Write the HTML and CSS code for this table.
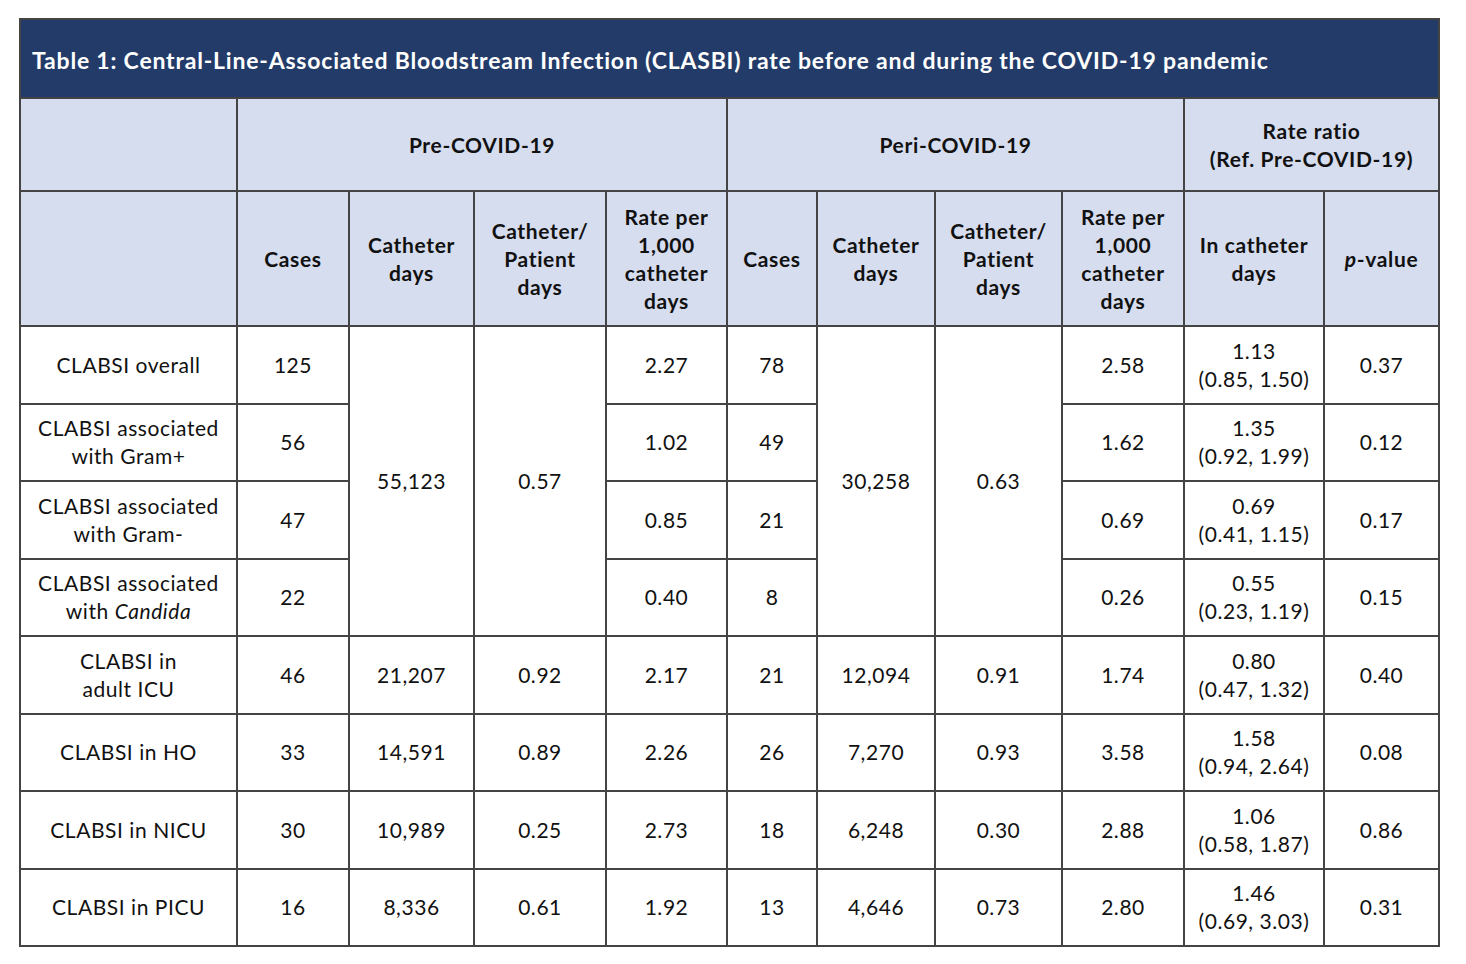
FILE: index.html
```html
<!DOCTYPE html>
<html>
<head>
<meta charset="utf-8">
<link rel="stylesheet" href="styles.css">
</head>
<body>
<table class="tbl">
  <colgroup>
    <col class="c-label"><col class="c-cases"><col class="c-days"><col class="c-ratio"><col class="c-rate">
    <col class="c-cases2"><col class="c-days2"><col class="c-ratio2"><col class="c-rate2">
    <col class="c-rr"><col class="c-p">
  </colgroup>
  <thead>
    <tr class="r-title"><th colspan="11" class="title">Table 1: Central-Line-Associated Bloodstream Infection (CLASBI) rate before and during the COVID-19 pandemic</th></tr>
    <tr class="r-h1 head">
      <th></th>
      <th colspan="4">Pre-COVID-19</th>
      <th colspan="4">Peri-COVID-19</th>
      <th colspan="2">Rate ratio<br>(Ref. Pre-COVID-19)</th>
    </tr>
    <tr class="r-h2 head">
      <th></th>
      <th>Cases</th>
      <th>Catheter<br>days</th>
      <th>Catheter/<br>Patient<br>days</th>
      <th>Rate per<br>1,000<br>catheter<br>days</th>
      <th>Cases</th>
      <th>Catheter<br>days</th>
      <th>Catheter/<br>Patient<br>days</th>
      <th>Rate per<br>1,000<br>catheter<br>days</th>
      <th>In catheter<br>days</th>
      <th><i>p</i>-value</th>
    </tr>
  </thead>
  <tbody>
    <tr class="r-data">
      <td>CLABSI overall</td><td>125</td><td rowspan="4">55,123</td><td rowspan="4">0.57</td><td>2.27</td>
      <td>78</td><td rowspan="4">30,258</td><td rowspan="4">0.63</td><td>2.58</td>
      <td>1.13<br>(0.85, 1.50)</td><td>0.37</td>
    </tr>
    <tr class="r-data">
      <td>CLABSI associated<br>with Gram+</td><td>56</td><td>1.02</td>
      <td>49</td><td>1.62</td>
      <td>1.35<br>(0.92, 1.99)</td><td>0.12</td>
    </tr>
    <tr class="r-data">
      <td>CLABSI associated<br>with Gram-</td><td>47</td><td>0.85</td>
      <td>21</td><td>0.69</td>
      <td>0.69<br>(0.41, 1.15)</td><td>0.17</td>
    </tr>
    <tr class="r-data">
      <td>CLABSI associated<br>with <i>Candida</i></td><td>22</td><td>0.40</td>
      <td>8</td><td>0.26</td>
      <td>0.55<br>(0.23, 1.19)</td><td>0.15</td>
    </tr>
    <tr class="r-data">
      <td>CLABSI in<br>adult ICU</td><td>46</td><td>21,207</td><td>0.92</td><td>2.17</td>
      <td>21</td><td>12,094</td><td>0.91</td><td>1.74</td>
      <td>0.80<br>(0.47, 1.32)</td><td>0.40</td>
    </tr>
    <tr class="r-data">
      <td>CLABSI in HO</td><td>33</td><td>14,591</td><td>0.89</td><td>2.26</td>
      <td>26</td><td>7,270</td><td>0.93</td><td>3.58</td>
      <td>1.58<br>(0.94, 2.64)</td><td>0.08</td>
    </tr>
    <tr class="r-data">
      <td>CLABSI in NICU</td><td>30</td><td>10,989</td><td>0.25</td><td>2.73</td>
      <td>18</td><td>6,248</td><td>0.30</td><td>2.88</td>
      <td>1.06<br>(0.58, 1.87)</td><td>0.86</td>
    </tr>
    <tr class="r-data">
      <td>CLABSI in PICU</td><td>16</td><td>8,336</td><td>0.61</td><td>1.92</td>
      <td>13</td><td>4,646</td><td>0.73</td><td>2.80</td>
      <td>1.46<br>(0.69, 3.03)</td><td>0.31</td>
    </tr>
  </tbody>
</table>
</body>
</html>
```

FILE: styles.css
```css
html, body {
  margin: 0;
  padding: 0;
  background: #ffffff;
}
body {
  padding: 18px 0 0 19px;
  font-family: "Lato", "Open Sans", sans-serif;
  color: #111111;
}
.tbl {
  border-collapse: collapse;
  table-layout: fixed;
  width: 1419px;
  border: 2px solid #444444;
}
.c-label { width: 217px; }
.c-cases { width: 112px; }
.c-days { width: 125px; }
.c-ratio { width: 132px; }
.c-rate { width: 121px; }
.c-cases2 { width: 90px; }
.c-days2 { width: 118px; }
.c-ratio2 { width: 127px; }
.c-rate2 { width: 122px; }
.c-rr { width: 140px; }
.c-p { width: 115px; }

.tbl th, .tbl td {
  border: 2px solid #444444;
  text-align: center;
  vertical-align: middle;
  padding: 0 2px;
  font-size: 21px;
  line-height: 28px;
}
.tbl th {
  font-weight: 700;
  letter-spacing: 0.65px;
}
.tbl td {
  font-weight: 400;
  letter-spacing: 0.55px;
}
.r-title { height: 79px; }
.title {
  background: #233b68;
  color: #ffffff;
  text-align: left !important;
  font-size: 23px !important;
  padding: 2px 0 0 11px !important;
  letter-spacing: 0.8px !important;
}
.head th { background: #d6ddef; }
.r-h1 { height: 93px; }
.r-h2 { height: 135px; }
.r-data { height: 77.5px; }
```
